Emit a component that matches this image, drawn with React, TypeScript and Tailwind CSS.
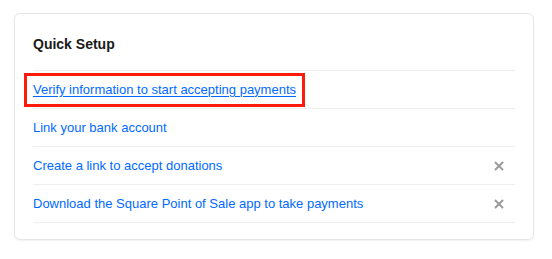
import { X } from "lucide-react";

type Task = {
  label: string;
  dismissible: boolean;
  focused?: boolean;
};

const tasks: Task[] = [
  { label: "Verify information to start accepting payments", dismissible: false, focused: true },
  { label: "Link your bank account", dismissible: false },
  { label: "Create a link to accept donations", dismissible: true },
  { label: "Download the Square Point of Sale app to take payments", dismissible: true },
];

export default function App() {
  return (
    <div className="min-h-[259px] w-[552px] bg-white pl-[14px] pt-[13px] font-['Liberation_Sans',Arial,sans-serif]">
      <section className="flex h-[227px] w-[520px] flex-col rounded-[6px] border border-[#e6e6e6] bg-white px-[18px] shadow-[0_1px_2px_rgba(0,0,0,0.06)]">
        <h2 className="mt-[21px] h-[35px] text-[14px] font-bold leading-[18px] text-[#1a1a1a]">
          Quick Setup
        </h2>
        <ul className="border-t border-[#eeeeee]">
          {tasks.map((task) => (
            <li
              key={task.label}
              className="flex h-[38px] items-center justify-between border-b border-[#eeeeee]"
            >
              {task.focused ? (
                <a
                  href="#"
                  className="-ml-[6px] px-[6px] py-[5px] text-[13px] leading-[18px] text-[#006aff] underline decoration-1 underline-offset-2 outline outline-[3px] outline-[#ff1a0a]"
                >
                  {task.label}
                </a>
              ) : (
                <a href="#" className="text-[13px] leading-[18px] text-[#006aff]">
                  {task.label}
                </a>
              )}
              {task.dismissible && (
                <button className="mr-[9px] text-[#9a9a9a]" aria-label="Dismiss">
                  <X size={14} strokeWidth={3.2} />
                </button>
              )}
            </li>
          ))}
        </ul>
      </section>
    </div>
  );
}
